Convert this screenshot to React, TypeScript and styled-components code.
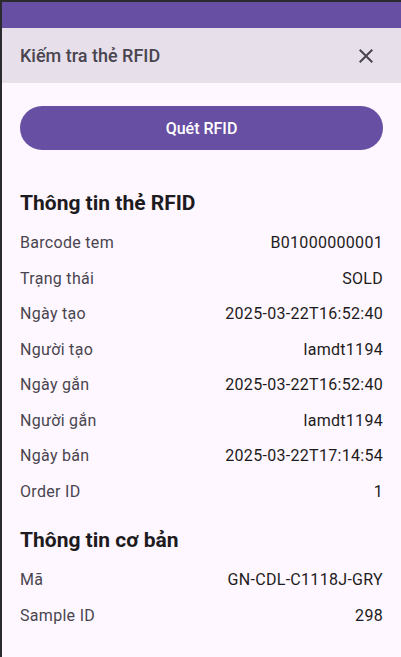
import React from "react";
import styled, { createGlobalStyle } from "styled-components";

const GlobalStyle = createGlobalStyle`
  html, body {
    margin: 0;
    padding: 0;
    background: #2b2a2e;
  }
  body {
    font-family: Roboto, "Noto Sans", sans-serif;
  }
`;

const Screen = styled.div`
  box-sizing: border-box;
  width: 401px;
  height: 657px;
  padding: 2px 0 0 2px;
  background: #2b2a2e;
  overflow: hidden;
`;

const Frame = styled.div`
  display: flex;
  flex-direction: column;
  height: 100%;
  background: #fef7ff;
`;

const StatusBar = styled.div`
  flex: none;
  height: 26px;
  background: #674fa3;
`;

const Header = styled.div`
  flex: none;
  display: flex;
  align-items: center;
  justify-content: space-between;
  height: 55px;
  padding: 0 23px 0 18px;
  background: #e7e0eb;
`;

const HeaderTitle = styled.div`
  font-size: 18px;
  font-weight: 500;
  color: #49454f;
`;

const CloseButton = styled.button`
  display: flex;
  align-items: center;
  justify-content: center;
  width: 24px;
  height: 24px;
  padding: 0;
  border: none;
  background: none;
  color: #49454f;
  cursor: pointer;
`;

const Body = styled.div`
  display: flex;
  flex-direction: column;
  padding: 23px 18px 0 18px;
`;

const ScanButton = styled.button`
  height: 44px;
  border: none;
  border-radius: 22px;
  background: #674fa3;
  color: #ffffff;
  font-family: Roboto, sans-serif;
  font-size: 16px;
  font-weight: 500;
  cursor: pointer;
`;

const SectionTitle = styled.h2<{ $top: number }>`
  margin: ${({ $top }) => $top}px 0 10px;
  height: 24px;
  line-height: 24px;
  font-size: 21px;
  font-weight: 700;
  color: #1d1b20;
`;

const Row = styled.div`
  display: flex;
  align-items: center;
  justify-content: space-between;
  height: 35.5px;
  font-size: 16px;
  letter-spacing: 0.3px;
`;

const Label = styled.span`
  color: #49454f;
`;

const Value = styled.span`
  color: #1d1b20;
`;

const CloseIcon = () => (
  <svg width="24" height="24" viewBox="0 0 24 24" fill="currentColor">
    <path d="M19 6.41L17.59 5 12 10.59 6.41 5 5 6.41 10.59 12 5 17.59 6.41 19 12 13.41 17.59 19 19 17.59 13.41 12z" />
  </svg>
);

const rfidInfo: [string, string][] = [
  ["Barcode tem", "B01000000001"],
  ["Trạng thái", "SOLD"],
  ["Ngày tạo", "2025-03-22T16:52:40"],
  ["Người tạo", "lamdt1194"],
  ["Ngày gắn", "2025-03-22T16:52:40"],
  ["Người gắn", "lamdt1194"],
  ["Ngày bán", "2025-03-22T17:14:54"],
  ["Order ID", "1"],
];

const basicInfo: [string, string][] = [
  ["Mã", "GN-CDL-C1118J-GRY"],
  ["Sample ID", "298"],
];

const App: React.FC = () => (
  <Screen>
    <GlobalStyle />
    <Frame>
      <StatusBar />
      <Header>
        <HeaderTitle>Kiếm tra thẻ RFID</HeaderTitle>
        <CloseButton aria-label="Đóng">
          <CloseIcon />
        </CloseButton>
      </Header>
      <Body>
        <ScanButton>Quét RFID</ScanButton>
        <SectionTitle $top={41}>Thông tin thẻ RFID</SectionTitle>
        {rfidInfo.map(([label, value]) => (
          <Row key={label}>
            <Label>{label}</Label>
            <Value>{value}</Value>
          </Row>
        ))}
        <SectionTitle $top={19}>Thông tin cơ bản</SectionTitle>
        {basicInfo.map(([label, value]) => (
          <Row key={label}>
            <Label>{label}</Label>
            <Value>{value}</Value>
          </Row>
        ))}
      </Body>
    </Frame>
  </Screen>
);

export default App;
